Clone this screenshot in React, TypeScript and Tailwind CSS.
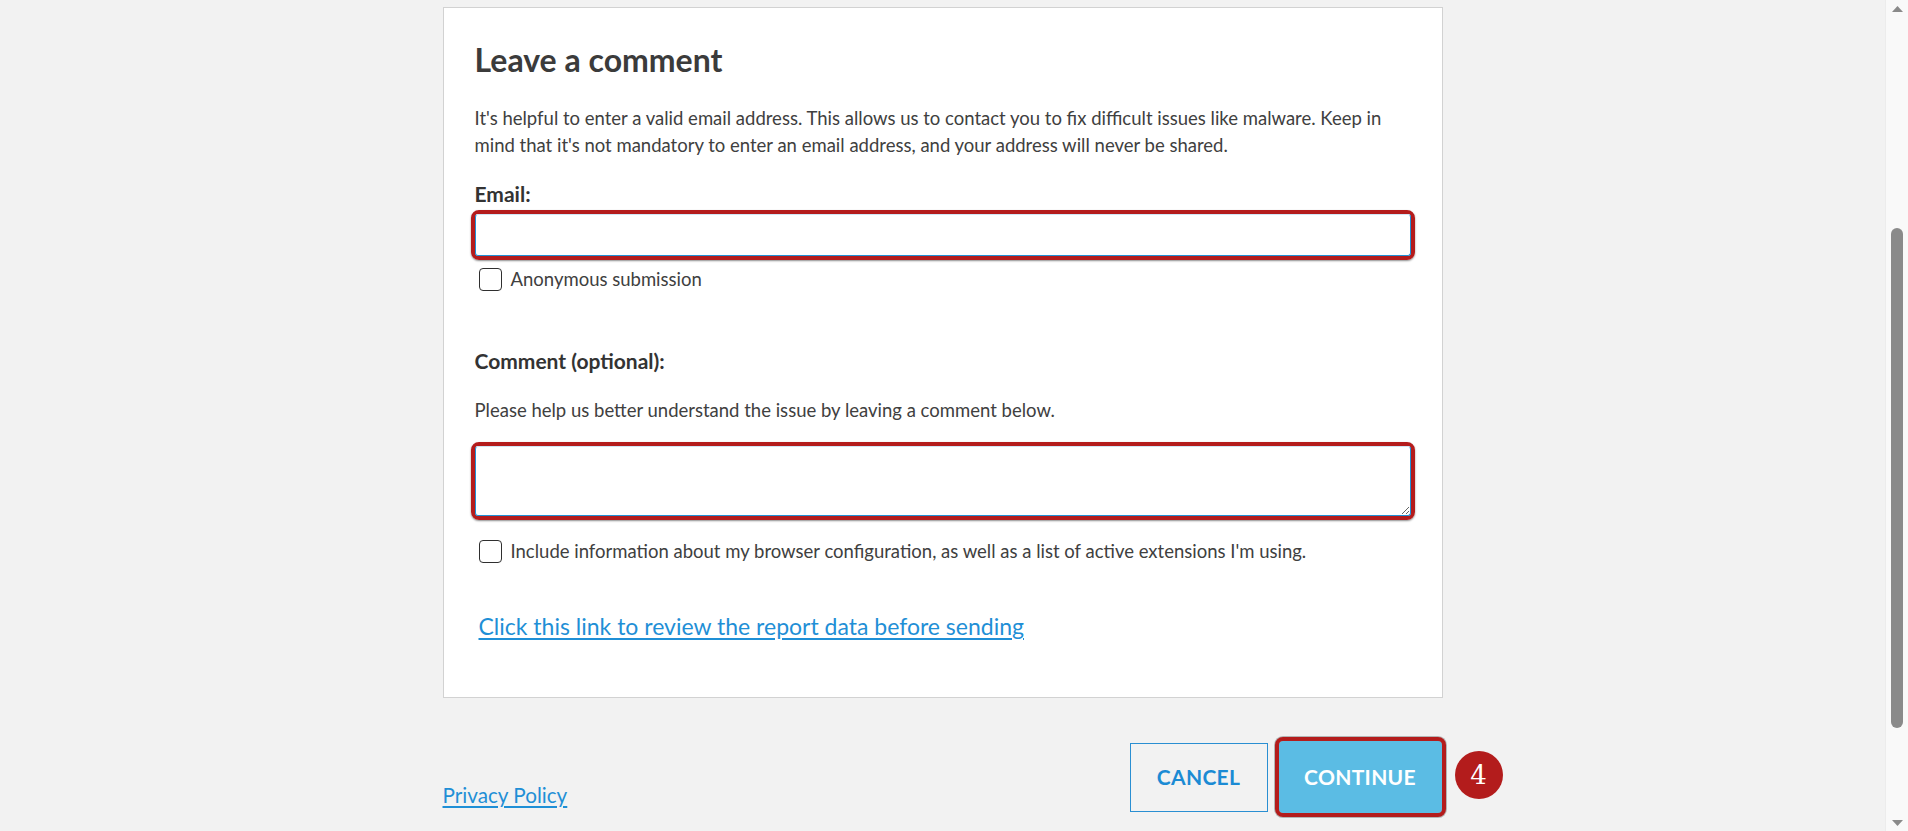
import React from "react";

const FONT = { fontFamily: "Lato, 'Noto Sans', sans-serif" };

function Check({ label }: { label: string }) {
  return (
    <div className="flex items-center pl-[4px] h-[23px]">
      <span className="block w-[23px] h-[23px] border-[1.5px] border-[#2f2f2f] rounded-[4px] bg-white shrink-0" />
      <span className="ml-[9px] text-[18.5px] leading-[23px] text-[#404040] whitespace-nowrap">{label}</span>
    </div>
  );
}

export default function App() {
  return (
    <div className="flex w-full h-[831px] overflow-hidden bg-[#f2f2f2]" style={FONT}>
      <div className="flex-1 flex flex-col items-center pt-[7px]">
        <div className="w-[1000px] bg-white border border-[#d2d2d2] px-[31px] pt-[34px] pb-[56px]">
          <h2 className="text-[32px] leading-[36px] font-bold text-[#3b3b3b]">Leave a comment</h2>
          <p className="mt-[27px] text-[18.5px] leading-[27px] text-[#404040] whitespace-nowrap">
            It's helpful to enter a valid email address. This allows us to contact you to fix difficult issues like malware. Keep in
            <br />
            mind that it's not mandatory to enter an email address, and your address will never be shared.
          </p>
          <div className="mt-[23px] text-[21px] leading-[24px] font-bold text-[#333333]">Email:</div>
          <div className="mt-[4px] -mx-[4px] border-4 border-[#b41c1c] rounded-[8px] shadow-[0_1px_2px_rgba(0,0,0,0.45)]">
            <input
              type="text"
              className="block w-full h-[42px] bg-white border border-[#2190d5] border-t-[#cfe6f6] rounded-[3px] outline-none"
            />
          </div>
          <div className="mt-[8px]">
            <Check label="Anonymous submission" />
          </div>
          <div className="mt-[58px] text-[21px] leading-[24px] font-bold text-[#333333]">Comment (optional):</div>
          <p className="mt-[24px] text-[18.5px] leading-[27px] text-[#404040]">
            Please help us better understand the issue by leaving a comment below.
          </p>
          <div className="mt-[18px] -mx-[4px] border-4 border-[#b41c1c] rounded-[8px] shadow-[0_1px_2px_rgba(0,0,0,0.45)]">
            <textarea className="block w-full h-[70px] bg-white border border-[#2190d5] border-t-[#cfe6f6] rounded-[3px] outline-none" />
          </div>
          <div className="mt-[20px]">
            <Check label="Include information about my browser configuration, as well as a list of active extensions I'm using." />
          </div>
          <div className="mt-[48px] pl-[4px]">
            <a href="#" className="text-[23px] leading-[30px] text-[#1f8fd6] underline underline-offset-[3px]">
              Click this link to review the report data before sending
            </a>
          </div>
        </div>
        <div className="w-[1000px] mt-[43px] flex justify-between items-end">
          <a href="#" className="mb-[6px] text-[20.7px] leading-[24px] text-[#1f8fd6] underline underline-offset-[3px]">
            Privacy Policy
          </a>
          <div className="flex items-center">
            <button className="w-[138px] h-[69px] border border-[#2a8fd2] bg-transparent text-[21px] font-bold text-[#1b8bd4] tracking-[0.3px]">
              CANCEL
            </button>
            <div className="relative ml-[11px] mr-[1px]">
              <button className="block w-[163px] h-[72px] bg-[#5bbce4] rounded-[4px] outline-4 outline-[#b41c1c] shadow-[0_0_0_5px_rgba(0,0,0,0.25)] text-[21px] font-bold text-white tracking-[0.3px]">
                CONTINUE
              </button>
              <div className="absolute left-[calc(100%+13px)] top-[10px] w-[48px] h-[48px] rounded-full bg-[#b31c1c] flex items-center justify-center">
                <span className="text-white text-[26px] leading-none" style={{ fontFamily: "'DejaVu Serif', 'Liberation Serif', serif" }}>
                  4
                </span>
              </div>
            </div>
          </div>
        </div>
      </div>
      <div className="w-[23px] h-full bg-[#f9f9f9] border-l border-[#ececec] flex flex-col items-center pt-[6px] pb-[5px]">
        <svg width="11" height="6" viewBox="0 0 11 6" className="block">
          <polygon points="0,6 5.5,0 11,6" fill="#8a8a8a" />
        </svg>
        <div className="mt-[216px] w-[12px] h-[500px] rounded-full bg-[#8a8a8a]" />
        <div className="flex-1" />
        <svg width="11" height="6" viewBox="0 0 11 6" className="block">
          <polygon points="0,0 11,0 5.5,6" fill="#8a8a8a" />
        </svg>
      </div>
    </div>
  );
}
